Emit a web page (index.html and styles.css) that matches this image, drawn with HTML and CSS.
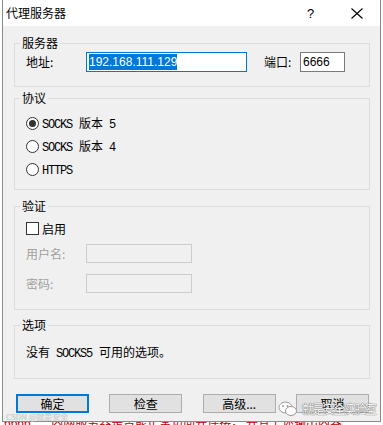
FILE: index.html
```html
<!DOCTYPE html>
<html lang="zh-CN">

<head>
    <meta charset="UTF-8">
    <meta name="viewport" content="width=device-width, initial-scale=1.0">
    <title>代理服务器</title>
    <link rel="stylesheet" href="styles.css">
</head>

<body>
    <div class="dialog">
        <div class="titlebar">
            <span class="title">代理服务器</span>
            <span class="help">?</span>
            <svg class="close" width="12" height="11" viewBox="0 0 12 11">
                <path d="M0.5 0.5 L11.5 10.5 M11.5 0.5 L0.5 10.5" stroke="#000" stroke-width="1.1" fill="none" />
            </svg>
        </div>

        <div class="content">
            <div class="group server">
                <span class="group-title">服务器</span>
                <div class="row">
                    <span class="label">地址:</span>
                    <div class="input address focused"><span class="selected">192.168.111.129</span></div>
                    <span class="port-label">端口:</span>
                    <div class="input port">6666</div>
                </div>
            </div>

            <div class="group protocol">
                <span class="group-title">协议</span>
                <div class="radio-row">
                    <span class="radio checked"></span>
                    <span class="opt"><span class="mono after">SOCKS</span>版本<span class="mono before">5</span></span>
                </div>
                <div class="radio-row">
                    <span class="radio"></span>
                    <span class="opt"><span class="mono after">SOCKS</span>版本<span class="mono before">4</span></span>
                </div>
                <div class="radio-row">
                    <span class="radio"></span>
                    <span class="opt"><span class="mono">HTTPS</span></span>
                </div>
            </div>

            <div class="group auth">
                <span class="group-title">验证</span>
                <div class="check-row">
                    <span class="checkbox"></span>
                    <span class="opt">启用</span>
                </div>
                <div class="field-row first">
                    <span class="label disabled">用户名:</span>
                    <div class="input off"></div>
                </div>
                <div class="field-row">
                    <span class="label disabled">密码:</span>
                    <div class="input off"></div>
                </div>
            </div>

            <div class="group options">
                <span class="group-title">选项</span>
                <div class="note">没有<span class="mono before after">SOCKS5</span>可用的选项。</div>
            </div>

            <div class="buttons">
                <button class="btn default">确定</button>
                <button class="btn">检查</button>
                <button class="btn">高级...</button>
                <button class="btn">取消</button>
            </div>
        </div>

        <div class="watermark">
            <svg width="20" height="16" viewBox="0 0 20 16">
                <ellipse cx="7.5" cy="6.5" rx="6.5" ry="5.5" fill="#fff" stroke="#9a9a9a" stroke-width="1" />
                <ellipse cx="13" cy="10" rx="5.5" ry="4.5" fill="#fff" stroke="#9a9a9a" stroke-width="1" />
                <circle cx="5" cy="5" r="0.9" fill="#9a9a9a" />
                <circle cx="9.5" cy="5" r="0.9" fill="#9a9a9a" />
            </svg>
            <span>就是安全实验室</span>
        </div>
        <div class="csdn">CSDN @就是安全</div>
    </div>

    <div class="behind">
        <span class="num">6666</span>
        <span>内网服务器是否能正常访问并连接，   并且上述输出内容</span>
    </div>
</body>

</html>
```

FILE: styles.css
```css
body {
    margin: 0;
    padding: 0;
    background-color: #fff;
    font-family: "Noto Sans CJK SC", "Liberation Sans", sans-serif;
    font-size: 12px;
    color: #000;
}

.dialog {
    position: relative;
    margin-left: 2px;
    width: 377px;
    background-color: #f0f0f0;
    border: 1px solid #8a8a8a;
    border-top: none;
}

.titlebar {
    height: 26px;
    background-color: #fff;
    display: flex;
    align-items: center;
    padding-left: 3px;
}

.title {
    line-height: 16px;
    margin-top: -1px;
}

.help {
    margin-left: 241px;
    font-family: "Liberation Sans", sans-serif;
    font-size: 13px;
}

.close {
    margin-left: 37px;
}

.content {
    padding: 17px 10px 8px 11px;
}

.group {
    position: relative;
    border: 1px solid #dcdcdc;
}

.group-title {
    position: absolute;
    top: -9px;
    left: 5px;
    padding: 0 2px;
    line-height: 16px;
    background-color: #f0f0f0;
}

.server {
    padding: 8px 11px 14px;
}

.row {
    display: flex;
    align-items: center;
    height: 20px;
}

.label {
    width: 60px;
    line-height: 16px;
}

.label.disabled {
    color: #a0a0a0;
}

.input {
    box-sizing: border-box;
    height: 20px;
    background-color: #fff;
    border: 1px solid #7a7a7a;
    font-family: "Liberation Sans", sans-serif;
    font-size: 12px;
    line-height: 18px;
    padding-left: 2px;
}

.address {
    width: 161px;
}

.focused {
    border-color: #0078d7;
}

.selected {
    background-color: #0078d7;
    color: #fff;
    padding: 1px 0;
}

.port-label {
    margin-left: 17px;
    width: 36px;
    line-height: 16px;
}

.port {
    width: 45px;
}

.protocol {
    margin-top: 11px;
    padding: 13px 11px 8px;
}

.radio-row {
    display: flex;
    align-items: center;
    height: 23px;
}

.radio {
    box-sizing: border-box;
    width: 13px;
    height: 13px;
    border: 1px solid #333;
    border-radius: 50%;
    background-color: #fff;
    display: flex;
    align-items: center;
    justify-content: center;
}

.radio.checked::after {
    content: "";
    width: 7px;
    height: 7px;
    border-radius: 50%;
    background-color: #333;
}

.opt {
    margin-left: 3px;
    line-height: 16px;
}

.mono {
    font-family: "Liberation Mono", monospace;
    letter-spacing: -1.2px;
}

.mono.after {
    margin-right: 7px;
}

.mono.before {
    margin-left: 6px;
}

.auth {
    margin-top: 16px;
    padding: 15px 11px 16px;
}

.check-row {
    display: flex;
    align-items: center;
    height: 13px;
}

.checkbox {
    box-sizing: border-box;
    width: 13px;
    height: 13px;
    border: 1px solid #333;
    background-color: #fff;
}

.field-row {
    display: flex;
    align-items: center;
    margin-top: 11px;
}

.field-row.first {
    margin-top: 9px;
}

.off {
    width: 106px;
    height: 19px;
    border-color: #cccccc;
    background-color: #f0f0f0;
}

.options {
    margin-top: 15px;
    padding: 18px 11px 16px;
}

.note {
    line-height: 16px;
}

.buttons {
    display: flex;
    justify-content: space-between;
    margin-top: 15px;
    padding: 0 1px 0 2px;
}

.btn {
    box-sizing: border-box;
    width: 73px;
    height: 19px;
    padding: 0;
    background-color: #e1e1e1;
    border: 1px solid #adadad;
    font-family: "Noto Sans CJK SC", sans-serif;
    font-size: 12px;
    line-height: 16px;
    color: #000;
}

.btn.default {
    border: 2px solid #0078d7;
}

.watermark {
    position: absolute;
    left: 275px;
    bottom: 4px;
    display: flex;
    align-items: center;
    gap: 4px;
    color: #fff;
    font-size: 12px;
    letter-spacing: -1.5px;
    text-shadow: 0 0 1px #555, 0 0 1px #555;
}

.csdn {
    position: absolute;
    left: 3px;
    bottom: 0;
    font-size: 8px;
    line-height: 9px;
    color: #d8d8d8;
    text-shadow: 0 0 1px #bbb;
}

.behind {
    height: 6px;
    overflow: hidden;
    padding-left: 4px;
    color: #c00000;
    font-size: 12px;
    line-height: 12px;
    white-space: nowrap;
}

.behind span {
    position: relative;
    top: -6px;
}

.behind .num {
    margin-right: 18px;
}
```
